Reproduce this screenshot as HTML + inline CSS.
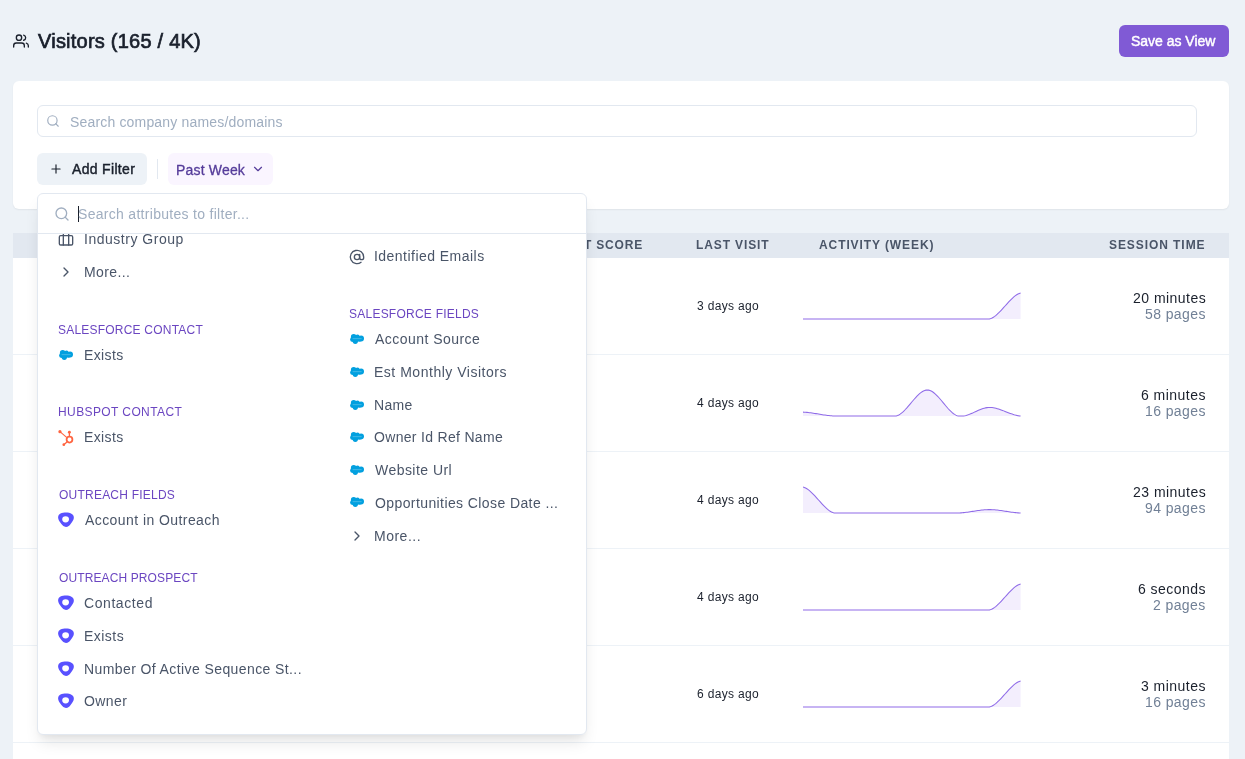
<!DOCTYPE html>
<html><head><meta charset="utf-8"><title>Visitors</title>
<style>
html,body{margin:0;padding:0}
body{width:1245px;height:759px;overflow:hidden;background:#EDF2F7;position:relative;font-family:"Liberation Sans", sans-serif}
.t{position:absolute;white-space:nowrap;will-change:transform}
.box{position:absolute;box-sizing:content-box}
.i{position:absolute;overflow:visible}
</style></head><body>
<svg class="i" style="left:13px;top:32.7px;" width="16" height="16" viewBox="0 0 24 24" fill="none" stroke="#1A202C" stroke-width="2" stroke-linecap="round" stroke-linejoin="round"><path d="M17 21v-2a4 4 0 0 0-4-4H5a4 4 0 0 0-4 4v2"/><circle cx="9" cy="7" r="4"/><path d="M23 21v-2a4 4 0 0 0-3-3.87"/><path d="M16 3.13a4 4 0 0 1 0 7.75"/></svg>
<div class="t" style="left:38.00px;top:31.07px;font-size:20px;line-height:20px;font-weight:400;color:#1A202C;letter-spacing:0.233px;-webkit-text-stroke:0.7px #1A202C;">Visitors (165 / 4K)</div>
<div class="box" style="left:1119px;top:25px;width:110px;height:32px;background:#805AD5;border-radius:6px"></div>
<div class="t" style="left:1131.00px;top:34.15px;font-size:14px;line-height:14px;font-weight:400;color:#FFFFFF;letter-spacing:-0.018px;-webkit-text-stroke:0.45px #fff;">Save as View</div>
<div class="box" style="left:13px;top:81px;width:1216px;height:128px;background:#fff;border-radius:6px;box-shadow:0 1px 2px rgba(0,0,0,0.06)"></div>
<div class="box" style="left:37px;top:105px;width:1158px;height:30px;border:1px solid #E2E8F0;border-radius:6px"></div>
<svg class="i" style="left:46px;top:114px;" width="14" height="14" viewBox="0 0 24 24" fill="none" stroke="#A0AEC0" stroke-width="2" stroke-linecap="round" stroke-linejoin="round"><circle cx="11" cy="11" r="8"/><line x1="21" y1="21" x2="16.65" y2="16.65"/></svg>
<div class="t" style="left:69.90px;top:115.35px;font-size:14px;line-height:14px;font-weight:400;color:#A0AEC0;letter-spacing:0.172px;">Search company names/domains</div>
<div class="box" style="left:37px;top:153px;width:110px;height:32px;background:#EDF2F7;border-radius:6px"></div>
<svg class="i" style="left:49px;top:162px;" width="14" height="14" viewBox="0 0 24 24" fill="none" stroke="#1A202C" stroke-width="2" stroke-linecap="round" stroke-linejoin="round"><line x1="12" y1="5" x2="12" y2="19"/><line x1="5" y1="12" x2="19" y2="12"/></svg>
<div class="t" style="left:71.50px;top:161.95px;font-size:14px;line-height:14px;font-weight:400;color:#1A202C;letter-spacing:0.322px;-webkit-text-stroke:0.45px #1A202C;">Add Filter</div>
<div class="box" style="left:157px;top:159px;width:1px;height:20px;background:#E2E8F0"></div>
<div class="box" style="left:168px;top:153px;width:105px;height:32px;background:#FAF5FF;border-radius:6px"></div>
<div class="t" style="left:175.70px;top:163.05px;font-size:14px;line-height:14px;font-weight:400;color:#553C9A;letter-spacing:0.175px;-webkit-text-stroke:0.3px #553C9A;">Past Week</div>
<svg class="i" style="left:251px;top:162px;" width="14" height="14" viewBox="0 0 24 24" fill="none" stroke="#553C9A" stroke-width="2" stroke-linecap="round" stroke-linejoin="round"><polyline points="6 9 12 15 18 9"/></svg>
<div class="box" style="left:13px;top:233px;width:1216px;height:526px;background:#fff"></div>
<div class="box" style="left:13px;top:233px;width:1216px;height:25px;background:#E2E8F0"></div>
<div class="box" style="left:13px;top:354px;width:1216px;height:1px;background:#EDF2F7"></div>
<div class="box" style="left:13px;top:451px;width:1216px;height:1px;background:#EDF2F7"></div>
<div class="box" style="left:13px;top:548px;width:1216px;height:1px;background:#EDF2F7"></div>
<div class="box" style="left:13px;top:645px;width:1216px;height:1px;background:#EDF2F7"></div>
<div class="box" style="left:13px;top:742px;width:1216px;height:1px;background:#EDF2F7"></div>
<div class="t" style="right:602.40px;top:238.84px;font-size:12px;line-height:12px;font-weight:700;color:#4A5568;letter-spacing:0.8px;">T SCORE</div>
<div class="t" style="left:696.00px;top:238.84px;font-size:12px;line-height:12px;font-weight:700;color:#4A5568;letter-spacing:0.878px;">LAST VISIT</div>
<div class="t" style="left:819.40px;top:238.84px;font-size:12px;line-height:12px;font-weight:700;color:#4A5568;letter-spacing:0.907px;">ACTIVITY (WEEK)</div>
<div class="t" style="right:39.40px;top:238.84px;font-size:12px;line-height:12px;font-weight:700;color:#4A5568;letter-spacing:0.928px;">SESSION TIME</div>
<div class="t" style="left:697.00px;top:299.64px;font-size:12px;line-height:12px;font-weight:400;color:#1A202C;letter-spacing:0.327px;">3 days ago</div>
<div class="t" style="right:39.20px;top:291.05px;font-size:14px;line-height:14px;font-weight:400;color:#1A202C;letter-spacing:0.472px;">20 minutes</div>
<div class="t" style="right:39.20px;top:307.25px;font-size:14px;line-height:14px;font-weight:400;color:#718096;letter-spacing:0.4px;">58 pages</div>
<svg class="i" style="left:803px;top:287.00px;overflow:hidden" width="219.60" height="34.00" viewBox="803 287.00 219.60 34.00"><path d="M803.00,319.00L804.30,319.00L805.59,319.00L806.89,319.00L808.18,319.00L809.48,319.00L810.77,319.00L812.07,319.00L813.36,319.00L814.66,319.00L815.95,319.00L817.25,319.00L818.54,319.00L819.84,319.00L821.13,319.00L822.43,319.00L823.72,319.00L825.02,319.00L826.31,319.00L827.61,319.00L828.90,319.00L830.20,319.00L831.50,319.00L832.79,319.00L834.09,319.00L835.38,319.00L836.68,319.00L837.97,319.00L839.27,319.00L840.56,319.00L841.86,319.00L843.15,319.00L844.45,319.00L845.74,319.00L847.04,319.00L848.33,319.00L849.63,319.00L850.92,319.00L852.22,319.00L853.51,319.00L854.81,319.00L856.10,319.00L857.40,319.00L858.70,319.00L859.99,319.00L861.29,319.00L862.58,319.00L863.88,319.00L865.17,319.00L866.47,319.00L867.76,319.00L869.06,319.00L870.35,319.00L871.65,319.00L872.94,319.00L874.24,319.00L875.53,319.00L876.83,319.00L878.12,319.00L879.42,319.00L880.71,319.00L882.01,319.00L883.30,319.00L884.60,319.00L885.90,319.00L887.19,319.00L888.49,319.00L889.78,319.00L891.08,319.00L892.37,319.00L893.67,319.00L894.96,319.00L896.26,319.00L897.55,319.00L898.85,319.00L900.14,319.00L901.44,319.00L902.73,319.00L904.03,319.00L905.32,319.00L906.62,319.00L907.91,319.00L909.21,319.00L910.50,319.00L911.80,319.00L913.10,319.00L914.39,319.00L915.69,319.00L916.98,319.00L918.28,319.00L919.57,319.00L920.87,319.00L922.16,319.00L923.46,319.00L924.75,319.00L926.05,319.00L927.34,319.00L928.64,319.00L929.93,319.00L931.23,319.00L932.52,319.00L933.82,319.00L935.11,319.00L936.41,319.00L937.70,319.00L939.00,319.00L940.30,319.00L941.59,319.00L942.89,319.00L944.18,319.00L945.48,319.00L946.77,319.00L948.07,319.00L949.36,319.00L950.66,319.00L951.95,319.00L953.25,319.00L954.54,319.00L955.84,319.00L957.13,319.00L958.43,319.00L959.72,319.00L961.02,319.00L962.31,319.00L963.61,319.00L964.90,319.00L966.20,319.00L967.50,319.00L968.79,319.00L970.09,319.00L971.38,319.00L972.68,319.00L973.97,319.00L975.27,319.00L976.56,319.00L977.86,319.00L979.15,319.00L980.45,319.00L981.74,319.00L983.04,319.00L984.33,319.00L985.63,319.00L986.92,319.00L988.22,319.00L989.51,319.00L990.81,318.58L992.10,317.99L993.40,317.24L994.70,316.35L995.99,315.33L997.29,314.21L998.58,312.98L999.88,311.68L1001.17,310.32L1002.47,308.90L1003.76,307.46L1005.06,306.00L1006.35,304.54L1007.65,303.10L1008.94,301.68L1010.24,300.32L1011.53,299.02L1012.83,297.79L1014.12,296.67L1015.42,295.65L1016.71,294.76L1018.01,294.01L1019.30,293.42L1020.60,293.00L1020.60,319.00L803.00,319.00Z" fill="#F3EEFD" stroke="none"/><path d="M803.00,319.00L804.30,319.00L805.59,319.00L806.89,319.00L808.18,319.00L809.48,319.00L810.77,319.00L812.07,319.00L813.36,319.00L814.66,319.00L815.95,319.00L817.25,319.00L818.54,319.00L819.84,319.00L821.13,319.00L822.43,319.00L823.72,319.00L825.02,319.00L826.31,319.00L827.61,319.00L828.90,319.00L830.20,319.00L831.50,319.00L832.79,319.00L834.09,319.00L835.38,319.00L836.68,319.00L837.97,319.00L839.27,319.00L840.56,319.00L841.86,319.00L843.15,319.00L844.45,319.00L845.74,319.00L847.04,319.00L848.33,319.00L849.63,319.00L850.92,319.00L852.22,319.00L853.51,319.00L854.81,319.00L856.10,319.00L857.40,319.00L858.70,319.00L859.99,319.00L861.29,319.00L862.58,319.00L863.88,319.00L865.17,319.00L866.47,319.00L867.76,319.00L869.06,319.00L870.35,319.00L871.65,319.00L872.94,319.00L874.24,319.00L875.53,319.00L876.83,319.00L878.12,319.00L879.42,319.00L880.71,319.00L882.01,319.00L883.30,319.00L884.60,319.00L885.90,319.00L887.19,319.00L888.49,319.00L889.78,319.00L891.08,319.00L892.37,319.00L893.67,319.00L894.96,319.00L896.26,319.00L897.55,319.00L898.85,319.00L900.14,319.00L901.44,319.00L902.73,319.00L904.03,319.00L905.32,319.00L906.62,319.00L907.91,319.00L909.21,319.00L910.50,319.00L911.80,319.00L913.10,319.00L914.39,319.00L915.69,319.00L916.98,319.00L918.28,319.00L919.57,319.00L920.87,319.00L922.16,319.00L923.46,319.00L924.75,319.00L926.05,319.00L927.34,319.00L928.64,319.00L929.93,319.00L931.23,319.00L932.52,319.00L933.82,319.00L935.11,319.00L936.41,319.00L937.70,319.00L939.00,319.00L940.30,319.00L941.59,319.00L942.89,319.00L944.18,319.00L945.48,319.00L946.77,319.00L948.07,319.00L949.36,319.00L950.66,319.00L951.95,319.00L953.25,319.00L954.54,319.00L955.84,319.00L957.13,319.00L958.43,319.00L959.72,319.00L961.02,319.00L962.31,319.00L963.61,319.00L964.90,319.00L966.20,319.00L967.50,319.00L968.79,319.00L970.09,319.00L971.38,319.00L972.68,319.00L973.97,319.00L975.27,319.00L976.56,319.00L977.86,319.00L979.15,319.00L980.45,319.00L981.74,319.00L983.04,319.00L984.33,319.00L985.63,319.00L986.92,319.00L988.22,319.00L989.51,319.00L990.81,318.58L992.10,317.99L993.40,317.24L994.70,316.35L995.99,315.33L997.29,314.21L998.58,312.98L999.88,311.68L1001.17,310.32L1002.47,308.90L1003.76,307.46L1005.06,306.00L1006.35,304.54L1007.65,303.10L1008.94,301.68L1010.24,300.32L1011.53,299.02L1012.83,297.79L1014.12,296.67L1015.42,295.65L1016.71,294.76L1018.01,294.01L1019.30,293.42L1020.60,293.00" fill="none" stroke="#8F6BE8" stroke-width="1.05"/></svg>
<div class="t" style="left:697.00px;top:396.64px;font-size:12px;line-height:12px;font-weight:400;color:#1A202C;letter-spacing:0.327px;">4 days ago</div>
<div class="t" style="right:39.20px;top:388.05px;font-size:14px;line-height:14px;font-weight:400;color:#1A202C;letter-spacing:0.472px;">6 minutes</div>
<div class="t" style="right:39.20px;top:404.25px;font-size:14px;line-height:14px;font-weight:400;color:#718096;letter-spacing:0.4px;">16 pages</div>
<svg class="i" style="left:803px;top:384.00px;overflow:hidden" width="219.60" height="34.00" viewBox="803 384.00 219.60 34.00"><path d="M803.00,412.10L804.30,412.16L805.59,412.25L806.89,412.36L808.18,412.50L809.48,412.65L810.77,412.82L812.07,413.00L813.36,413.20L814.66,413.40L815.95,413.61L817.25,413.83L818.54,414.05L819.84,414.27L821.13,414.49L822.43,414.70L823.72,414.90L825.02,415.10L826.31,415.28L827.61,415.45L828.90,415.60L830.20,415.74L831.50,415.85L832.79,415.94L834.09,416.00L835.38,416.00L836.68,416.00L837.97,416.00L839.27,416.00L840.56,416.00L841.86,416.00L843.15,416.00L844.45,416.00L845.74,416.00L847.04,416.00L848.33,416.00L849.63,416.00L850.92,416.00L852.22,416.00L853.51,416.00L854.81,416.00L856.10,416.00L857.40,416.00L858.70,416.00L859.99,416.00L861.29,416.00L862.58,416.00L863.88,416.00L865.17,416.00L866.47,416.00L867.76,416.00L869.06,416.00L870.35,416.00L871.65,416.00L872.94,416.00L874.24,416.00L875.53,416.00L876.83,416.00L878.12,416.00L879.42,416.00L880.71,416.00L882.01,416.00L883.30,416.00L884.60,416.00L885.90,416.00L887.19,416.00L888.49,416.00L889.78,416.00L891.08,416.00L892.37,416.00L893.67,416.00L894.96,416.00L896.26,416.00L897.55,415.57L898.85,414.94L900.14,414.14L901.44,413.17L902.73,412.07L904.03,410.84L905.32,409.51L906.62,408.10L907.91,406.63L909.21,405.11L910.50,403.57L911.80,402.02L913.10,400.49L914.39,398.99L915.69,397.54L916.98,396.16L918.28,394.88L919.57,393.70L920.87,392.65L922.16,391.75L923.46,391.01L924.75,390.46L926.05,390.12L927.34,390.00L928.64,390.12L929.93,390.48L931.23,391.05L932.52,391.80L933.82,392.74L935.11,393.82L936.41,395.03L937.70,396.35L939.00,397.77L940.30,399.25L941.59,400.78L942.89,402.35L944.18,403.92L945.48,405.48L946.77,407.01L948.07,408.49L949.36,409.89L950.66,411.20L951.95,412.40L953.25,413.47L954.54,414.38L955.84,415.12L957.13,415.67L958.43,416.00L959.72,416.00L961.02,416.00L962.31,416.00L963.61,415.97L964.90,415.72L966.20,415.39L967.50,415.00L968.79,414.55L970.09,414.05L971.38,413.51L972.68,412.95L973.97,412.36L975.27,411.77L976.56,411.18L977.86,410.59L979.15,410.03L980.45,409.50L981.74,409.01L983.04,408.56L984.33,408.18L985.63,407.86L986.92,407.62L988.22,407.47L989.51,407.42L990.81,407.46L992.10,407.57L993.40,407.75L994.70,408.00L995.99,408.29L997.29,408.64L998.58,409.03L999.88,409.45L1001.17,409.91L1002.47,410.39L1003.76,410.88L1005.06,411.39L1006.35,411.90L1007.65,412.41L1008.94,412.91L1010.24,413.39L1011.53,413.86L1012.83,414.30L1014.12,414.70L1015.42,415.07L1016.71,415.38L1018.01,415.65L1019.30,415.86L1020.60,416.00L1020.60,416.00L803.00,416.00Z" fill="#F3EEFD" stroke="none"/><path d="M803.00,412.10L804.30,412.16L805.59,412.25L806.89,412.36L808.18,412.50L809.48,412.65L810.77,412.82L812.07,413.00L813.36,413.20L814.66,413.40L815.95,413.61L817.25,413.83L818.54,414.05L819.84,414.27L821.13,414.49L822.43,414.70L823.72,414.90L825.02,415.10L826.31,415.28L827.61,415.45L828.90,415.60L830.20,415.74L831.50,415.85L832.79,415.94L834.09,416.00L835.38,416.00L836.68,416.00L837.97,416.00L839.27,416.00L840.56,416.00L841.86,416.00L843.15,416.00L844.45,416.00L845.74,416.00L847.04,416.00L848.33,416.00L849.63,416.00L850.92,416.00L852.22,416.00L853.51,416.00L854.81,416.00L856.10,416.00L857.40,416.00L858.70,416.00L859.99,416.00L861.29,416.00L862.58,416.00L863.88,416.00L865.17,416.00L866.47,416.00L867.76,416.00L869.06,416.00L870.35,416.00L871.65,416.00L872.94,416.00L874.24,416.00L875.53,416.00L876.83,416.00L878.12,416.00L879.42,416.00L880.71,416.00L882.01,416.00L883.30,416.00L884.60,416.00L885.90,416.00L887.19,416.00L888.49,416.00L889.78,416.00L891.08,416.00L892.37,416.00L893.67,416.00L894.96,416.00L896.26,416.00L897.55,415.57L898.85,414.94L900.14,414.14L901.44,413.17L902.73,412.07L904.03,410.84L905.32,409.51L906.62,408.10L907.91,406.63L909.21,405.11L910.50,403.57L911.80,402.02L913.10,400.49L914.39,398.99L915.69,397.54L916.98,396.16L918.28,394.88L919.57,393.70L920.87,392.65L922.16,391.75L923.46,391.01L924.75,390.46L926.05,390.12L927.34,390.00L928.64,390.12L929.93,390.48L931.23,391.05L932.52,391.80L933.82,392.74L935.11,393.82L936.41,395.03L937.70,396.35L939.00,397.77L940.30,399.25L941.59,400.78L942.89,402.35L944.18,403.92L945.48,405.48L946.77,407.01L948.07,408.49L949.36,409.89L950.66,411.20L951.95,412.40L953.25,413.47L954.54,414.38L955.84,415.12L957.13,415.67L958.43,416.00L959.72,416.00L961.02,416.00L962.31,416.00L963.61,415.97L964.90,415.72L966.20,415.39L967.50,415.00L968.79,414.55L970.09,414.05L971.38,413.51L972.68,412.95L973.97,412.36L975.27,411.77L976.56,411.18L977.86,410.59L979.15,410.03L980.45,409.50L981.74,409.01L983.04,408.56L984.33,408.18L985.63,407.86L986.92,407.62L988.22,407.47L989.51,407.42L990.81,407.46L992.10,407.57L993.40,407.75L994.70,408.00L995.99,408.29L997.29,408.64L998.58,409.03L999.88,409.45L1001.17,409.91L1002.47,410.39L1003.76,410.88L1005.06,411.39L1006.35,411.90L1007.65,412.41L1008.94,412.91L1010.24,413.39L1011.53,413.86L1012.83,414.30L1014.12,414.70L1015.42,415.07L1016.71,415.38L1018.01,415.65L1019.30,415.86L1020.60,416.00" fill="none" stroke="#8F6BE8" stroke-width="1.05"/></svg>
<div class="t" style="left:697.00px;top:493.64px;font-size:12px;line-height:12px;font-weight:400;color:#1A202C;letter-spacing:0.327px;">4 days ago</div>
<div class="t" style="right:39.20px;top:485.05px;font-size:14px;line-height:14px;font-weight:400;color:#1A202C;letter-spacing:0.472px;">23 minutes</div>
<div class="t" style="right:39.20px;top:501.25px;font-size:14px;line-height:14px;font-weight:400;color:#718096;letter-spacing:0.4px;">94 pages</div>
<svg class="i" style="left:803px;top:481.00px;overflow:hidden" width="219.60" height="34.00" viewBox="803 481.00 219.60 34.00"><path d="M803.00,487.00L804.30,487.42L805.59,488.01L806.89,488.76L808.18,489.65L809.48,490.67L810.77,491.79L812.07,493.02L813.36,494.32L814.66,495.68L815.95,497.10L817.25,498.54L818.54,500.00L819.84,501.46L821.13,502.90L822.43,504.32L823.72,505.68L825.02,506.98L826.31,508.21L827.61,509.33L828.90,510.35L830.20,511.24L831.50,511.99L832.79,512.58L834.09,513.00L835.38,513.00L836.68,513.00L837.97,513.00L839.27,513.00L840.56,513.00L841.86,513.00L843.15,513.00L844.45,513.00L845.74,513.00L847.04,513.00L848.33,513.00L849.63,513.00L850.92,513.00L852.22,513.00L853.51,513.00L854.81,513.00L856.10,513.00L857.40,513.00L858.70,513.00L859.99,513.00L861.29,513.00L862.58,513.00L863.88,513.00L865.17,513.00L866.47,513.00L867.76,513.00L869.06,513.00L870.35,513.00L871.65,513.00L872.94,513.00L874.24,513.00L875.53,513.00L876.83,513.00L878.12,513.00L879.42,513.00L880.71,513.00L882.01,513.00L883.30,513.00L884.60,513.00L885.90,513.00L887.19,513.00L888.49,513.00L889.78,513.00L891.08,513.00L892.37,513.00L893.67,513.00L894.96,513.00L896.26,513.00L897.55,513.00L898.85,513.00L900.14,513.00L901.44,513.00L902.73,513.00L904.03,513.00L905.32,513.00L906.62,513.00L907.91,513.00L909.21,513.00L910.50,513.00L911.80,513.00L913.10,513.00L914.39,513.00L915.69,513.00L916.98,513.00L918.28,513.00L919.57,513.00L920.87,513.00L922.16,513.00L923.46,513.00L924.75,513.00L926.05,513.00L927.34,513.00L928.64,513.00L929.93,513.00L931.23,513.00L932.52,513.00L933.82,513.00L935.11,513.00L936.41,513.00L937.70,513.00L939.00,513.00L940.30,513.00L941.59,513.00L942.89,513.00L944.18,513.00L945.48,513.00L946.77,513.00L948.07,513.00L949.36,513.00L950.66,513.00L951.95,513.00L953.25,513.00L954.54,513.00L955.84,513.00L957.13,513.00L958.43,513.00L959.72,512.94L961.02,512.86L962.31,512.76L963.61,512.63L964.90,512.49L966.20,512.33L967.50,512.16L968.79,511.97L970.09,511.78L971.38,511.58L972.68,511.38L973.97,511.18L975.27,510.98L976.56,510.79L977.86,510.60L979.15,510.42L980.45,510.25L981.74,510.10L983.04,509.96L984.33,509.85L985.63,509.75L986.92,509.68L988.22,509.64L989.51,509.62L990.81,509.64L992.10,509.68L993.40,509.75L994.70,509.85L995.99,509.96L997.29,510.10L998.58,510.25L999.88,510.42L1001.17,510.60L1002.47,510.79L1003.76,510.98L1005.06,511.18L1006.35,511.38L1007.65,511.58L1008.94,511.78L1010.24,511.97L1011.53,512.16L1012.83,512.33L1014.12,512.49L1015.42,512.63L1016.71,512.76L1018.01,512.86L1019.30,512.94L1020.60,513.00L1020.60,513.00L803.00,513.00Z" fill="#F3EEFD" stroke="none"/><path d="M803.00,487.00L804.30,487.42L805.59,488.01L806.89,488.76L808.18,489.65L809.48,490.67L810.77,491.79L812.07,493.02L813.36,494.32L814.66,495.68L815.95,497.10L817.25,498.54L818.54,500.00L819.84,501.46L821.13,502.90L822.43,504.32L823.72,505.68L825.02,506.98L826.31,508.21L827.61,509.33L828.90,510.35L830.20,511.24L831.50,511.99L832.79,512.58L834.09,513.00L835.38,513.00L836.68,513.00L837.97,513.00L839.27,513.00L840.56,513.00L841.86,513.00L843.15,513.00L844.45,513.00L845.74,513.00L847.04,513.00L848.33,513.00L849.63,513.00L850.92,513.00L852.22,513.00L853.51,513.00L854.81,513.00L856.10,513.00L857.40,513.00L858.70,513.00L859.99,513.00L861.29,513.00L862.58,513.00L863.88,513.00L865.17,513.00L866.47,513.00L867.76,513.00L869.06,513.00L870.35,513.00L871.65,513.00L872.94,513.00L874.24,513.00L875.53,513.00L876.83,513.00L878.12,513.00L879.42,513.00L880.71,513.00L882.01,513.00L883.30,513.00L884.60,513.00L885.90,513.00L887.19,513.00L888.49,513.00L889.78,513.00L891.08,513.00L892.37,513.00L893.67,513.00L894.96,513.00L896.26,513.00L897.55,513.00L898.85,513.00L900.14,513.00L901.44,513.00L902.73,513.00L904.03,513.00L905.32,513.00L906.62,513.00L907.91,513.00L909.21,513.00L910.50,513.00L911.80,513.00L913.10,513.00L914.39,513.00L915.69,513.00L916.98,513.00L918.28,513.00L919.57,513.00L920.87,513.00L922.16,513.00L923.46,513.00L924.75,513.00L926.05,513.00L927.34,513.00L928.64,513.00L929.93,513.00L931.23,513.00L932.52,513.00L933.82,513.00L935.11,513.00L936.41,513.00L937.70,513.00L939.00,513.00L940.30,513.00L941.59,513.00L942.89,513.00L944.18,513.00L945.48,513.00L946.77,513.00L948.07,513.00L949.36,513.00L950.66,513.00L951.95,513.00L953.25,513.00L954.54,513.00L955.84,513.00L957.13,513.00L958.43,513.00L959.72,512.94L961.02,512.86L962.31,512.76L963.61,512.63L964.90,512.49L966.20,512.33L967.50,512.16L968.79,511.97L970.09,511.78L971.38,511.58L972.68,511.38L973.97,511.18L975.27,510.98L976.56,510.79L977.86,510.60L979.15,510.42L980.45,510.25L981.74,510.10L983.04,509.96L984.33,509.85L985.63,509.75L986.92,509.68L988.22,509.64L989.51,509.62L990.81,509.64L992.10,509.68L993.40,509.75L994.70,509.85L995.99,509.96L997.29,510.10L998.58,510.25L999.88,510.42L1001.17,510.60L1002.47,510.79L1003.76,510.98L1005.06,511.18L1006.35,511.38L1007.65,511.58L1008.94,511.78L1010.24,511.97L1011.53,512.16L1012.83,512.33L1014.12,512.49L1015.42,512.63L1016.71,512.76L1018.01,512.86L1019.30,512.94L1020.60,513.00" fill="none" stroke="#8F6BE8" stroke-width="1.05"/></svg>
<div class="t" style="left:697.00px;top:590.64px;font-size:12px;line-height:12px;font-weight:400;color:#1A202C;letter-spacing:0.327px;">4 days ago</div>
<div class="t" style="right:39.20px;top:582.05px;font-size:14px;line-height:14px;font-weight:400;color:#1A202C;letter-spacing:0.472px;">6 seconds</div>
<div class="t" style="right:39.20px;top:598.25px;font-size:14px;line-height:14px;font-weight:400;color:#718096;letter-spacing:0.4px;">2 pages</div>
<svg class="i" style="left:803px;top:578.00px;overflow:hidden" width="219.60" height="34.00" viewBox="803 578.00 219.60 34.00"><path d="M803.00,610.00L804.30,610.00L805.59,610.00L806.89,610.00L808.18,610.00L809.48,610.00L810.77,610.00L812.07,610.00L813.36,610.00L814.66,610.00L815.95,610.00L817.25,610.00L818.54,610.00L819.84,610.00L821.13,610.00L822.43,610.00L823.72,610.00L825.02,610.00L826.31,610.00L827.61,610.00L828.90,610.00L830.20,610.00L831.50,610.00L832.79,610.00L834.09,610.00L835.38,610.00L836.68,610.00L837.97,610.00L839.27,610.00L840.56,610.00L841.86,610.00L843.15,610.00L844.45,610.00L845.74,610.00L847.04,610.00L848.33,610.00L849.63,610.00L850.92,610.00L852.22,610.00L853.51,610.00L854.81,610.00L856.10,610.00L857.40,610.00L858.70,610.00L859.99,610.00L861.29,610.00L862.58,610.00L863.88,610.00L865.17,610.00L866.47,610.00L867.76,610.00L869.06,610.00L870.35,610.00L871.65,610.00L872.94,610.00L874.24,610.00L875.53,610.00L876.83,610.00L878.12,610.00L879.42,610.00L880.71,610.00L882.01,610.00L883.30,610.00L884.60,610.00L885.90,610.00L887.19,610.00L888.49,610.00L889.78,610.00L891.08,610.00L892.37,610.00L893.67,610.00L894.96,610.00L896.26,610.00L897.55,610.00L898.85,610.00L900.14,610.00L901.44,610.00L902.73,610.00L904.03,610.00L905.32,610.00L906.62,610.00L907.91,610.00L909.21,610.00L910.50,610.00L911.80,610.00L913.10,610.00L914.39,610.00L915.69,610.00L916.98,610.00L918.28,610.00L919.57,610.00L920.87,610.00L922.16,610.00L923.46,610.00L924.75,610.00L926.05,610.00L927.34,610.00L928.64,610.00L929.93,610.00L931.23,610.00L932.52,610.00L933.82,610.00L935.11,610.00L936.41,610.00L937.70,610.00L939.00,610.00L940.30,610.00L941.59,610.00L942.89,610.00L944.18,610.00L945.48,610.00L946.77,610.00L948.07,610.00L949.36,610.00L950.66,610.00L951.95,610.00L953.25,610.00L954.54,610.00L955.84,610.00L957.13,610.00L958.43,610.00L959.72,610.00L961.02,610.00L962.31,610.00L963.61,610.00L964.90,610.00L966.20,610.00L967.50,610.00L968.79,610.00L970.09,610.00L971.38,610.00L972.68,610.00L973.97,610.00L975.27,610.00L976.56,610.00L977.86,610.00L979.15,610.00L980.45,610.00L981.74,610.00L983.04,610.00L984.33,610.00L985.63,610.00L986.92,610.00L988.22,610.00L989.51,610.00L990.81,609.58L992.10,608.99L993.40,608.24L994.70,607.35L995.99,606.33L997.29,605.21L998.58,603.98L999.88,602.68L1001.17,601.32L1002.47,599.90L1003.76,598.46L1005.06,597.00L1006.35,595.54L1007.65,594.10L1008.94,592.68L1010.24,591.32L1011.53,590.02L1012.83,588.79L1014.12,587.67L1015.42,586.65L1016.71,585.76L1018.01,585.01L1019.30,584.42L1020.60,584.00L1020.60,610.00L803.00,610.00Z" fill="#F3EEFD" stroke="none"/><path d="M803.00,610.00L804.30,610.00L805.59,610.00L806.89,610.00L808.18,610.00L809.48,610.00L810.77,610.00L812.07,610.00L813.36,610.00L814.66,610.00L815.95,610.00L817.25,610.00L818.54,610.00L819.84,610.00L821.13,610.00L822.43,610.00L823.72,610.00L825.02,610.00L826.31,610.00L827.61,610.00L828.90,610.00L830.20,610.00L831.50,610.00L832.79,610.00L834.09,610.00L835.38,610.00L836.68,610.00L837.97,610.00L839.27,610.00L840.56,610.00L841.86,610.00L843.15,610.00L844.45,610.00L845.74,610.00L847.04,610.00L848.33,610.00L849.63,610.00L850.92,610.00L852.22,610.00L853.51,610.00L854.81,610.00L856.10,610.00L857.40,610.00L858.70,610.00L859.99,610.00L861.29,610.00L862.58,610.00L863.88,610.00L865.17,610.00L866.47,610.00L867.76,610.00L869.06,610.00L870.35,610.00L871.65,610.00L872.94,610.00L874.24,610.00L875.53,610.00L876.83,610.00L878.12,610.00L879.42,610.00L880.71,610.00L882.01,610.00L883.30,610.00L884.60,610.00L885.90,610.00L887.19,610.00L888.49,610.00L889.78,610.00L891.08,610.00L892.37,610.00L893.67,610.00L894.96,610.00L896.26,610.00L897.55,610.00L898.85,610.00L900.14,610.00L901.44,610.00L902.73,610.00L904.03,610.00L905.32,610.00L906.62,610.00L907.91,610.00L909.21,610.00L910.50,610.00L911.80,610.00L913.10,610.00L914.39,610.00L915.69,610.00L916.98,610.00L918.28,610.00L919.57,610.00L920.87,610.00L922.16,610.00L923.46,610.00L924.75,610.00L926.05,610.00L927.34,610.00L928.64,610.00L929.93,610.00L931.23,610.00L932.52,610.00L933.82,610.00L935.11,610.00L936.41,610.00L937.70,610.00L939.00,610.00L940.30,610.00L941.59,610.00L942.89,610.00L944.18,610.00L945.48,610.00L946.77,610.00L948.07,610.00L949.36,610.00L950.66,610.00L951.95,610.00L953.25,610.00L954.54,610.00L955.84,610.00L957.13,610.00L958.43,610.00L959.72,610.00L961.02,610.00L962.31,610.00L963.61,610.00L964.90,610.00L966.20,610.00L967.50,610.00L968.79,610.00L970.09,610.00L971.38,610.00L972.68,610.00L973.97,610.00L975.27,610.00L976.56,610.00L977.86,610.00L979.15,610.00L980.45,610.00L981.74,610.00L983.04,610.00L984.33,610.00L985.63,610.00L986.92,610.00L988.22,610.00L989.51,610.00L990.81,609.58L992.10,608.99L993.40,608.24L994.70,607.35L995.99,606.33L997.29,605.21L998.58,603.98L999.88,602.68L1001.17,601.32L1002.47,599.90L1003.76,598.46L1005.06,597.00L1006.35,595.54L1007.65,594.10L1008.94,592.68L1010.24,591.32L1011.53,590.02L1012.83,588.79L1014.12,587.67L1015.42,586.65L1016.71,585.76L1018.01,585.01L1019.30,584.42L1020.60,584.00" fill="none" stroke="#8F6BE8" stroke-width="1.05"/></svg>
<div class="t" style="left:697.00px;top:687.64px;font-size:12px;line-height:12px;font-weight:400;color:#1A202C;letter-spacing:0.327px;">6 days ago</div>
<div class="t" style="right:39.20px;top:679.05px;font-size:14px;line-height:14px;font-weight:400;color:#1A202C;letter-spacing:0.472px;">3 minutes</div>
<div class="t" style="right:39.20px;top:695.25px;font-size:14px;line-height:14px;font-weight:400;color:#718096;letter-spacing:0.4px;">16 pages</div>
<svg class="i" style="left:803px;top:675.00px;overflow:hidden" width="219.60" height="34.00" viewBox="803 675.00 219.60 34.00"><path d="M803.00,707.00L804.30,707.00L805.59,707.00L806.89,707.00L808.18,707.00L809.48,707.00L810.77,707.00L812.07,707.00L813.36,707.00L814.66,707.00L815.95,707.00L817.25,707.00L818.54,707.00L819.84,707.00L821.13,707.00L822.43,707.00L823.72,707.00L825.02,707.00L826.31,707.00L827.61,707.00L828.90,707.00L830.20,707.00L831.50,707.00L832.79,707.00L834.09,707.00L835.38,707.00L836.68,707.00L837.97,707.00L839.27,707.00L840.56,707.00L841.86,707.00L843.15,707.00L844.45,707.00L845.74,707.00L847.04,707.00L848.33,707.00L849.63,707.00L850.92,707.00L852.22,707.00L853.51,707.00L854.81,707.00L856.10,707.00L857.40,707.00L858.70,707.00L859.99,707.00L861.29,707.00L862.58,707.00L863.88,707.00L865.17,707.00L866.47,707.00L867.76,707.00L869.06,707.00L870.35,707.00L871.65,707.00L872.94,707.00L874.24,707.00L875.53,707.00L876.83,707.00L878.12,707.00L879.42,707.00L880.71,707.00L882.01,707.00L883.30,707.00L884.60,707.00L885.90,707.00L887.19,707.00L888.49,707.00L889.78,707.00L891.08,707.00L892.37,707.00L893.67,707.00L894.96,707.00L896.26,707.00L897.55,707.00L898.85,707.00L900.14,707.00L901.44,707.00L902.73,707.00L904.03,707.00L905.32,707.00L906.62,707.00L907.91,707.00L909.21,707.00L910.50,707.00L911.80,707.00L913.10,707.00L914.39,707.00L915.69,707.00L916.98,707.00L918.28,707.00L919.57,707.00L920.87,707.00L922.16,707.00L923.46,707.00L924.75,707.00L926.05,707.00L927.34,707.00L928.64,707.00L929.93,707.00L931.23,707.00L932.52,707.00L933.82,707.00L935.11,707.00L936.41,707.00L937.70,707.00L939.00,707.00L940.30,707.00L941.59,707.00L942.89,707.00L944.18,707.00L945.48,707.00L946.77,707.00L948.07,707.00L949.36,707.00L950.66,707.00L951.95,707.00L953.25,707.00L954.54,707.00L955.84,707.00L957.13,707.00L958.43,707.00L959.72,707.00L961.02,707.00L962.31,707.00L963.61,707.00L964.90,707.00L966.20,707.00L967.50,707.00L968.79,707.00L970.09,707.00L971.38,707.00L972.68,707.00L973.97,707.00L975.27,707.00L976.56,707.00L977.86,707.00L979.15,707.00L980.45,707.00L981.74,707.00L983.04,707.00L984.33,707.00L985.63,707.00L986.92,707.00L988.22,707.00L989.51,707.00L990.81,706.58L992.10,705.99L993.40,705.24L994.70,704.35L995.99,703.33L997.29,702.21L998.58,700.98L999.88,699.68L1001.17,698.32L1002.47,696.90L1003.76,695.46L1005.06,694.00L1006.35,692.54L1007.65,691.10L1008.94,689.68L1010.24,688.32L1011.53,687.02L1012.83,685.79L1014.12,684.67L1015.42,683.65L1016.71,682.76L1018.01,682.01L1019.30,681.42L1020.60,681.00L1020.60,707.00L803.00,707.00Z" fill="#F3EEFD" stroke="none"/><path d="M803.00,707.00L804.30,707.00L805.59,707.00L806.89,707.00L808.18,707.00L809.48,707.00L810.77,707.00L812.07,707.00L813.36,707.00L814.66,707.00L815.95,707.00L817.25,707.00L818.54,707.00L819.84,707.00L821.13,707.00L822.43,707.00L823.72,707.00L825.02,707.00L826.31,707.00L827.61,707.00L828.90,707.00L830.20,707.00L831.50,707.00L832.79,707.00L834.09,707.00L835.38,707.00L836.68,707.00L837.97,707.00L839.27,707.00L840.56,707.00L841.86,707.00L843.15,707.00L844.45,707.00L845.74,707.00L847.04,707.00L848.33,707.00L849.63,707.00L850.92,707.00L852.22,707.00L853.51,707.00L854.81,707.00L856.10,707.00L857.40,707.00L858.70,707.00L859.99,707.00L861.29,707.00L862.58,707.00L863.88,707.00L865.17,707.00L866.47,707.00L867.76,707.00L869.06,707.00L870.35,707.00L871.65,707.00L872.94,707.00L874.24,707.00L875.53,707.00L876.83,707.00L878.12,707.00L879.42,707.00L880.71,707.00L882.01,707.00L883.30,707.00L884.60,707.00L885.90,707.00L887.19,707.00L888.49,707.00L889.78,707.00L891.08,707.00L892.37,707.00L893.67,707.00L894.96,707.00L896.26,707.00L897.55,707.00L898.85,707.00L900.14,707.00L901.44,707.00L902.73,707.00L904.03,707.00L905.32,707.00L906.62,707.00L907.91,707.00L909.21,707.00L910.50,707.00L911.80,707.00L913.10,707.00L914.39,707.00L915.69,707.00L916.98,707.00L918.28,707.00L919.57,707.00L920.87,707.00L922.16,707.00L923.46,707.00L924.75,707.00L926.05,707.00L927.34,707.00L928.64,707.00L929.93,707.00L931.23,707.00L932.52,707.00L933.82,707.00L935.11,707.00L936.41,707.00L937.70,707.00L939.00,707.00L940.30,707.00L941.59,707.00L942.89,707.00L944.18,707.00L945.48,707.00L946.77,707.00L948.07,707.00L949.36,707.00L950.66,707.00L951.95,707.00L953.25,707.00L954.54,707.00L955.84,707.00L957.13,707.00L958.43,707.00L959.72,707.00L961.02,707.00L962.31,707.00L963.61,707.00L964.90,707.00L966.20,707.00L967.50,707.00L968.79,707.00L970.09,707.00L971.38,707.00L972.68,707.00L973.97,707.00L975.27,707.00L976.56,707.00L977.86,707.00L979.15,707.00L980.45,707.00L981.74,707.00L983.04,707.00L984.33,707.00L985.63,707.00L986.92,707.00L988.22,707.00L989.51,707.00L990.81,706.58L992.10,705.99L993.40,705.24L994.70,704.35L995.99,703.33L997.29,702.21L998.58,700.98L999.88,699.68L1001.17,698.32L1002.47,696.90L1003.76,695.46L1005.06,694.00L1006.35,692.54L1007.65,691.10L1008.94,689.68L1010.24,688.32L1011.53,687.02L1012.83,685.79L1014.12,684.67L1015.42,683.65L1016.71,682.76L1018.01,682.01L1019.30,681.42L1020.60,681.00" fill="none" stroke="#8F6BE8" stroke-width="1.05"/></svg>
<div class="box" style="left:37px;top:193px;width:548px;height:540px;background:#fff;border:1px solid #E2E8F0;border-radius:6px;box-shadow:0 10px 15px -3px rgba(0,0,0,0.1),0 4px 6px -2px rgba(0,0,0,0.05)"></div>
<svg class="i" style="left:54px;top:206px;" width="16" height="16" viewBox="0 0 24 24" fill="none" stroke="#A0AEC0" stroke-width="2" stroke-linecap="round" stroke-linejoin="round"><circle cx="11" cy="11" r="8"/><line x1="21" y1="21" x2="16.65" y2="16.65"/></svg>
<div class="box" style="left:78px;top:206px;width:1px;height:16px;background:#1A202C"></div>
<div class="t" style="left:78.20px;top:207.25px;font-size:14px;line-height:14px;font-weight:400;color:#A0AEC0;letter-spacing:0.295px;">Search attributes to filter...</div>
<div class="box" style="left:38px;top:233px;width:548px;height:1px;background:#E2E8F0"></div>
<div class="box" style="left:38px;top:234px;width:548px;height:500px;overflow:hidden">
<svg class="i" style="left:20.200000000000003px;top:-3px;" width="16" height="16" viewBox="0 0 24 24" fill="none" stroke="#4A5568" stroke-width="2" stroke-linecap="round" stroke-linejoin="round"><rect x="2" y="7" width="20" height="14" rx="2" ry="2"/><path d="M16 21V5a2 2 0 0 0-2-2h-4a2 2 0 0 0-2 2v16"/></svg>
<div class="t" style="left:45.80px;top:-2.05px;font-size:14px;line-height:14px;font-weight:400;color:#4A5568;letter-spacing:0.52px;">Industry Group</div>
<svg class="i" style="left:20px;top:30px;" width="16" height="16" viewBox="0 0 24 24" fill="none" stroke="#4A5568" stroke-width="2" stroke-linecap="round" stroke-linejoin="round"><polyline points="9 18 15 12 9 6"/></svg>
<div class="t" style="left:45.80px;top:31.05px;font-size:14px;line-height:14px;font-weight:400;color:#4A5568;letter-spacing:0.383px;">More...</div>
<div class="t" style="left:19.50px;top:89.84px;font-size:12px;line-height:12px;font-weight:400;color:#6B46C1;letter-spacing:0.211px;">SALESFORCE CONTACT</div>
<svg class="i" style="left:21.00px;top:115.80px" width="14" height="10" viewBox="0 0 14 10"><g fill="#03A0DF"><circle cx="3.7" cy="2.9" r="2.8"/><circle cx="7.5" cy="2.6" r="2.2"/><circle cx="11.1" cy="4.5" r="2.9"/><circle cx="2.4" cy="5.6" r="2.3"/><circle cx="5.3" cy="7.3" r="2.6"/><circle cx="9.8" cy="5.6" r="2.1"/><ellipse cx="7" cy="5" rx="4.5" ry="2.8"/></g><rect x="2.6" y="4.3" width="9" height="0.8" fill="#fff" opacity="0.3"/></svg>
<div class="t" style="left:46.10px;top:113.95px;font-size:14px;line-height:14px;font-weight:400;color:#4A5568;letter-spacing:0.39px;">Exists</div>
<div class="t" style="left:19.50px;top:171.84px;font-size:12px;line-height:12px;font-weight:400;color:#6B46C1;letter-spacing:0.4px;">HUBSPOT CONTACT</div>
<svg class="i" style="left:18.00px;top:194.00px" width="20" height="20" viewBox="0 0 20 20"><g fill="none" stroke="#FF6440"><circle cx="13.5" cy="11.6" r="2.9" stroke-width="1.75"/><line x1="13.4" y1="4.2" x2="13.4" y2="8.5" stroke-width="1.3"/><line x1="3.95" y1="3.7" x2="10.6" y2="9.3" stroke-width="1.1"/><line x1="7.8" y1="16.7" x2="11" y2="13.9" stroke-width="1.3"/></g><g fill="#FF6440"><circle cx="13.4" cy="4.2" r="1.45"/><circle cx="3.95" cy="3.7" r="1.6"/><circle cx="7.8" cy="16.7" r="1.35"/></g></svg>
<div class="t" style="left:46.10px;top:196.05px;font-size:14px;line-height:14px;font-weight:400;color:#4A5568;letter-spacing:0.39px;">Exists</div>
<div class="t" style="left:20.50px;top:254.84px;font-size:12px;line-height:12px;font-weight:400;color:#6B46C1;letter-spacing:0.228px;">OUTREACH FIELDS</div>
<svg class="i" style="left:20.00px;top:278.30px" width="16" height="16" viewBox="0 0 16 16"><path fill="#5951FF" fill-rule="evenodd" d="M0.1,5.6C0.1,3.5 1,2.2 2.5,1.4C4,0.6 6,0.5 8,0.5C10,0.5 12.3,0.9 13.8,2.1C15.3,3.2 16.1,4.5 15.8,6.2C15.5,8 14.2,10 12.6,12C11.4,13.6 10.2,14.9 8,14.9C5.8,14.9 4.6,13.7 3.4,12.1C1.6,9.8 0.1,7.8 0.1,5.6ZM4.2,7.3A3.4,3.1 0 1 0 11,7.3A3.4,3.1 0 1 0 4.2,7.3Z"/></svg>
<div class="t" style="left:47.40px;top:279.35px;font-size:14px;line-height:14px;font-weight:400;color:#4A5568;letter-spacing:0.427px;">Account in Outreach</div>
<div class="t" style="left:20.50px;top:337.74px;font-size:12px;line-height:12px;font-weight:400;color:#6B46C1;letter-spacing:0.113px;">OUTREACH PROSPECT</div>
<svg class="i" style="left:20.00px;top:361.20px" width="16" height="16" viewBox="0 0 16 16"><path fill="#5951FF" fill-rule="evenodd" d="M0.1,5.6C0.1,3.5 1,2.2 2.5,1.4C4,0.6 6,0.5 8,0.5C10,0.5 12.3,0.9 13.8,2.1C15.3,3.2 16.1,4.5 15.8,6.2C15.5,8 14.2,10 12.6,12C11.4,13.6 10.2,14.9 8,14.9C5.8,14.9 4.6,13.7 3.4,12.1C1.6,9.8 0.1,7.8 0.1,5.6ZM4.2,7.3A3.4,3.1 0 1 0 11,7.3A3.4,3.1 0 1 0 4.2,7.3Z"/></svg>
<div class="t" style="left:46.40px;top:362.25px;font-size:14px;line-height:14px;font-weight:400;color:#4A5568;letter-spacing:0.575px;">Contacted</div>
<svg class="i" style="left:20.00px;top:394.40px" width="16" height="16" viewBox="0 0 16 16"><path fill="#5951FF" fill-rule="evenodd" d="M0.1,5.6C0.1,3.5 1,2.2 2.5,1.4C4,0.6 6,0.5 8,0.5C10,0.5 12.3,0.9 13.8,2.1C15.3,3.2 16.1,4.5 15.8,6.2C15.5,8 14.2,10 12.6,12C11.4,13.6 10.2,14.9 8,14.9C5.8,14.9 4.6,13.7 3.4,12.1C1.6,9.8 0.1,7.8 0.1,5.6ZM4.2,7.3A3.4,3.1 0 1 0 11,7.3A3.4,3.1 0 1 0 4.2,7.3Z"/></svg>
<div class="t" style="left:46.40px;top:395.45px;font-size:14px;line-height:14px;font-weight:400;color:#4A5568;letter-spacing:0.47px;">Exists</div>
<svg class="i" style="left:20.00px;top:427.00px" width="16" height="16" viewBox="0 0 16 16"><path fill="#5951FF" fill-rule="evenodd" d="M0.1,5.6C0.1,3.5 1,2.2 2.5,1.4C4,0.6 6,0.5 8,0.5C10,0.5 12.3,0.9 13.8,2.1C15.3,3.2 16.1,4.5 15.8,6.2C15.5,8 14.2,10 12.6,12C11.4,13.6 10.2,14.9 8,14.9C5.8,14.9 4.6,13.7 3.4,12.1C1.6,9.8 0.1,7.8 0.1,5.6ZM4.2,7.3A3.4,3.1 0 1 0 11,7.3A3.4,3.1 0 1 0 4.2,7.3Z"/></svg>
<div class="t" style="left:46.40px;top:428.05px;font-size:14px;line-height:14px;font-weight:400;color:#4A5568;letter-spacing:0.404px;">Number Of Active Sequence St...</div>
<svg class="i" style="left:20.00px;top:459.30px" width="16" height="16" viewBox="0 0 16 16"><path fill="#5951FF" fill-rule="evenodd" d="M0.1,5.6C0.1,3.5 1,2.2 2.5,1.4C4,0.6 6,0.5 8,0.5C10,0.5 12.3,0.9 13.8,2.1C15.3,3.2 16.1,4.5 15.8,6.2C15.5,8 14.2,10 12.6,12C11.4,13.6 10.2,14.9 8,14.9C5.8,14.9 4.6,13.7 3.4,12.1C1.6,9.8 0.1,7.8 0.1,5.6ZM4.2,7.3A3.4,3.1 0 1 0 11,7.3A3.4,3.1 0 1 0 4.2,7.3Z"/></svg>
<div class="t" style="left:46.40px;top:460.35px;font-size:14px;line-height:14px;font-weight:400;color:#4A5568;letter-spacing:0.425px;">Owner</div>
<svg class="i" style="left:311px;top:15px;" width="16" height="16" viewBox="0 0 24 24" fill="none" stroke="#4A5568" stroke-width="2" stroke-linecap="round" stroke-linejoin="round"><circle cx="12" cy="12" r="4"/><path d="M16 8v5a3 3 0 0 0 6 0v-1a10 10 0 1 0-3.92 7.94"/></svg>
<div class="t" style="left:336.20px;top:15.25px;font-size:14px;line-height:14px;font-weight:400;color:#4A5568;letter-spacing:0.464px;">Identified Emails</div>
<div class="t" style="left:310.50px;top:73.84px;font-size:12px;line-height:12px;font-weight:400;color:#6B46C1;letter-spacing:0.237px;">SALESFORCE FIELDS</div>
<svg class="i" style="left:312.00px;top:99.90px" width="14" height="10" viewBox="0 0 14 10"><g fill="#03A0DF"><circle cx="3.7" cy="2.9" r="2.8"/><circle cx="7.5" cy="2.6" r="2.2"/><circle cx="11.1" cy="4.5" r="2.9"/><circle cx="2.4" cy="5.6" r="2.3"/><circle cx="5.3" cy="7.3" r="2.6"/><circle cx="9.8" cy="5.6" r="2.1"/><ellipse cx="7" cy="5" rx="4.5" ry="2.8"/></g><rect x="2.6" y="4.3" width="9" height="0.8" fill="#fff" opacity="0.3"/></svg>
<div class="t" style="left:337.00px;top:98.15px;font-size:14px;line-height:14px;font-weight:400;color:#4A5568;letter-spacing:0.458px;">Account Source</div>
<svg class="i" style="left:312.00px;top:133.00px" width="14" height="10" viewBox="0 0 14 10"><g fill="#03A0DF"><circle cx="3.7" cy="2.9" r="2.8"/><circle cx="7.5" cy="2.6" r="2.2"/><circle cx="11.1" cy="4.5" r="2.9"/><circle cx="2.4" cy="5.6" r="2.3"/><circle cx="5.3" cy="7.3" r="2.6"/><circle cx="9.8" cy="5.6" r="2.1"/><ellipse cx="7" cy="5" rx="4.5" ry="2.8"/></g><rect x="2.6" y="4.3" width="9" height="0.8" fill="#fff" opacity="0.3"/></svg>
<div class="t" style="left:336.00px;top:131.25px;font-size:14px;line-height:14px;font-weight:400;color:#4A5568;letter-spacing:0.518px;">Est Monthly Visitors</div>
<svg class="i" style="left:312.00px;top:165.90px" width="14" height="10" viewBox="0 0 14 10"><g fill="#03A0DF"><circle cx="3.7" cy="2.9" r="2.8"/><circle cx="7.5" cy="2.6" r="2.2"/><circle cx="11.1" cy="4.5" r="2.9"/><circle cx="2.4" cy="5.6" r="2.3"/><circle cx="5.3" cy="7.3" r="2.6"/><circle cx="9.8" cy="5.6" r="2.1"/><ellipse cx="7" cy="5" rx="4.5" ry="2.8"/></g><rect x="2.6" y="4.3" width="9" height="0.8" fill="#fff" opacity="0.3"/></svg>
<div class="t" style="left:336.00px;top:164.15px;font-size:14px;line-height:14px;font-weight:400;color:#4A5568;letter-spacing:0.283px;">Name</div>
<svg class="i" style="left:312.00px;top:197.60px" width="14" height="10" viewBox="0 0 14 10"><g fill="#03A0DF"><circle cx="3.7" cy="2.9" r="2.8"/><circle cx="7.5" cy="2.6" r="2.2"/><circle cx="11.1" cy="4.5" r="2.9"/><circle cx="2.4" cy="5.6" r="2.3"/><circle cx="5.3" cy="7.3" r="2.6"/><circle cx="9.8" cy="5.6" r="2.1"/><ellipse cx="7" cy="5" rx="4.5" ry="2.8"/></g><rect x="2.6" y="4.3" width="9" height="0.8" fill="#fff" opacity="0.3"/></svg>
<div class="t" style="left:336.00px;top:195.85px;font-size:14px;line-height:14px;font-weight:400;color:#4A5568;letter-spacing:0.313px;">Owner Id Ref Name</div>
<svg class="i" style="left:312.00px;top:230.70px" width="14" height="10" viewBox="0 0 14 10"><g fill="#03A0DF"><circle cx="3.7" cy="2.9" r="2.8"/><circle cx="7.5" cy="2.6" r="2.2"/><circle cx="11.1" cy="4.5" r="2.9"/><circle cx="2.4" cy="5.6" r="2.3"/><circle cx="5.3" cy="7.3" r="2.6"/><circle cx="9.8" cy="5.6" r="2.1"/><ellipse cx="7" cy="5" rx="4.5" ry="2.8"/></g><rect x="2.6" y="4.3" width="9" height="0.8" fill="#fff" opacity="0.3"/></svg>
<div class="t" style="left:337.00px;top:228.95px;font-size:14px;line-height:14px;font-weight:400;color:#4A5568;letter-spacing:0.46px;">Website Url</div>
<svg class="i" style="left:312.00px;top:263.40px" width="14" height="10" viewBox="0 0 14 10"><g fill="#03A0DF"><circle cx="3.7" cy="2.9" r="2.8"/><circle cx="7.5" cy="2.6" r="2.2"/><circle cx="11.1" cy="4.5" r="2.9"/><circle cx="2.4" cy="5.6" r="2.3"/><circle cx="5.3" cy="7.3" r="2.6"/><circle cx="9.8" cy="5.6" r="2.1"/><ellipse cx="7" cy="5" rx="4.5" ry="2.8"/></g><rect x="2.6" y="4.3" width="9" height="0.8" fill="#fff" opacity="0.3"/></svg>
<div class="t" style="left:336.60px;top:261.65px;font-size:14px;line-height:14px;font-weight:400;color:#4A5568;letter-spacing:0.403px;">Opportunities Close Date ...</div>
<svg class="i" style="left:311px;top:293.9px;" width="16" height="16" viewBox="0 0 24 24" fill="none" stroke="#4A5568" stroke-width="2" stroke-linecap="round" stroke-linejoin="round"><polyline points="9 18 15 12 9 6"/></svg>
<div class="t" style="left:336.00px;top:294.95px;font-size:14px;line-height:14px;font-weight:400;color:#4A5568;letter-spacing:0.5px;">More...</div>
</div>
</body></html>
